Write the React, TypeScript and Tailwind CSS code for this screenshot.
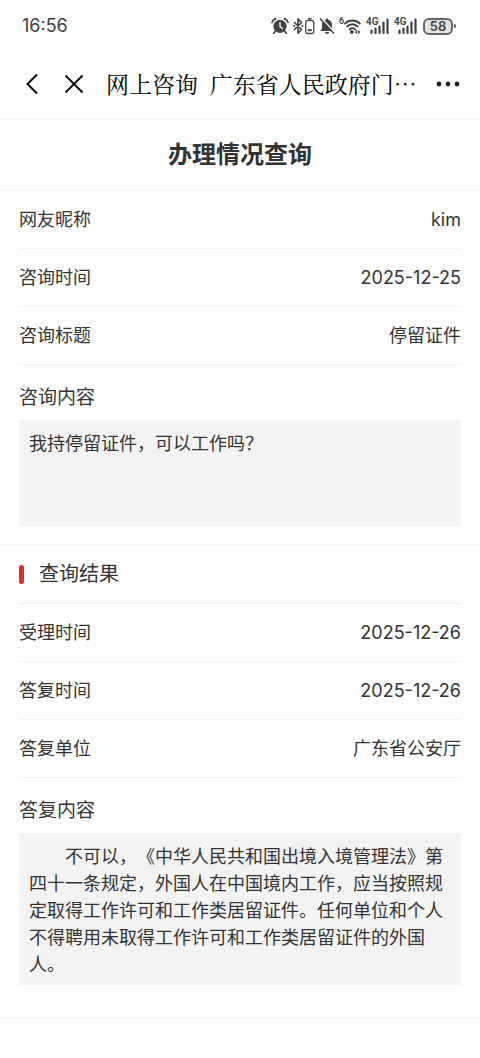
import type { ReactNode } from 'react';

function AlarmIcon() {
  return (
    <svg width="18" height="18" viewBox="0 0 18 18" aria-hidden="true">
      <path d="M1 5.500A6 6 0 0 1 4.600 1.600M17 5.500A6 6 0 0 0 13.400 1.600M4 14.600l-1.400 1.600M14 14.600l1.400 1.600" fill="none" stroke="#404040" strokeWidth="1.700" strokeLinecap="round" />
      <circle cx="9" cy="9.300" r="6.600" fill="#404040" />
      <path d="M9 5.500v4l2.600 2.200" fill="none" stroke="#fff" strokeWidth="1.300" strokeLinecap="round" />
    </svg>
  );
}

function BluetoothIcon() {
  return (
    <svg width="22" height="18" viewBox="0 0 22 18" aria-hidden="true">
      <path d="M1.500 5.500l7 7-3.500 3.600V1.900l3.500 3.600-7 7" fill="none" stroke="#404040" strokeWidth="1.600" strokeLinejoin="round" strokeLinecap="round" />
      <circle cx="1.200" cy="9" r="1" fill="#404040" />
      <circle cx="9.400" cy="9" r="1" fill="#404040" />
      <rect x="12.700" y="3.500" width="8" height="13" rx="2" fill="none" stroke="#505050" strokeWidth="1.400" />
      <path d="M14.700 1.700h4" stroke="#505050" strokeWidth="1.600" />
      <path d="M14.700 13.200h4" stroke="#404040" strokeWidth="2" />
    </svg>
  );
}

function BellOffIcon() {
  return (
    <svg width="16" height="18" viewBox="0 0 16 18" aria-hidden="true">
      <path d="M8 1.500c.8 0 1.200.5 1.200 1.200 2.500.6 3.800 2.500 3.800 5v4l1.800 2.300H1.200L3 11.700v-4c0-2.500 1.300-4.400 3.800-5C6.800 2 7.200 1.500 8 1.500zM6 15h4a2 2 0 0 1-4 0z" fill="#404040" />
      <path d="M2.800 1.600l13 14" stroke="#fff" strokeWidth="1.600" />
      <path d="M1.500 2.200L14.500 16" stroke="#404040" strokeWidth="1.600" strokeLinecap="round" />
    </svg>
  );
}

function WifiIcon() {
  return (
    <svg width="24" height="18" viewBox="0 0 24 18" className="overflow-visible" aria-hidden="true">
      <text x="0" y="7" fontSize="9" fontWeight="600" fill="#404040" className="font-['Roboto']">6</text>
      <path d="M6 6.600a10.500 10.500 0 0 1 14.800 0M8.200 9.500a7.200 7.200 0 0 1 10.400 0M10.700 12.300a3.900 3.900 0 0 1 5.400 0" fill="none" stroke="#404040" strokeWidth="1.900" strokeLinecap="round" />
      <circle cx="12.800" cy="15" r="1.900" fill="#404040" />
      <path d="M18 12.800v4.400L15.600 15zM19 12.800v4.400l2.400-2.200z" fill="#404040" />
    </svg>
  );
}

function SignalIcon() {
  return (
    <svg width="24" height="18" viewBox="0 0 24 18" className="overflow-visible" aria-hidden="true">
      <text x="-1" y="8" fontSize="10" fontWeight="600" fill="#404040" className="font-['Roboto']">4G</text>
      <path d="M4.500 13.500V16M8.500 11.500V16M12.500 9.500V16M16.500 5.500V16M20.500 2.500V16" stroke="#404040" strokeWidth="2.200" strokeLinecap="round" />
    </svg>
  );
}

function Field({ label, children }: { label: string; children: ReactNode }) {
  return (
    <div className="flex h-[58px] items-center justify-between border-b border-[#f2f2f2] text-[18px] leading-6">
      <dt>{label}</dt>
      <dd>{children}</dd>
    </div>
  );
}

function ContentBlock({ label, children, className }: { label: string; children: ReactNode; className: string }) {
  return (
    <>
      <h3 className="pt-[19px] pb-2 text-[19px] leading-7">{label}</h3>
      <p className={`bg-[#f3f3f3] px-2.5 pt-2.5 pb-[7px] text-[18px] leading-[27px] ${className}`}>{children}</p>
    </>
  );
}

export default function App() {
  return (
    <div className="min-h-screen bg-[#fefefe] font-['Inter','Noto_Sans_CJK_SC',sans-serif] text-[#333] [text-spacing-trim:space-all]" lang="zh-CN">
      <div className="flex h-12 items-center justify-between pt-1 pr-6 pl-[22px] text-[#404040]">
        <time className="text-[18px] leading-6">16:56</time>
        <div className="flex items-center gap-1">
          <AlarmIcon />
          <BluetoothIcon />
          <BellOffIcon />
          <WifiIcon />
          <SignalIcon />
          <SignalIcon />
          <div className="flex items-center gap-px">
            <span className="flex h-[17px] w-[30px] items-center justify-center rounded-md border-2 border-[#666] bg-[#e2e2e2] text-[13px] leading-none font-semibold">58</span>
            <span className="h-1 w-0.5 rounded-r bg-[#555]" />
          </div>
        </div>
      </div>

      <header className="flex h-[72px] items-center border-b border-[#f4f4f4] pr-5 pl-[22px] text-black">
        <button type="button" aria-label="返回" className="mr-5 flex">
          <svg width="20" height="24" viewBox="0 0 20 24" aria-hidden="true">
            <path d="M15 2.500L5.500 12l9.500 9.500" fill="none" stroke="#111" strokeWidth="2" />
          </svg>
        </button>
        <button type="button" aria-label="关闭" className="mr-5 flex">
          <svg width="24" height="24" viewBox="0 0 24 24" aria-hidden="true">
            <path d="M3.500 3.500l17 17M20.500 3.500l-17 17" fill="none" stroke="#111" strokeWidth="2" />
          </svg>
        </button>
        <h1 className="flex-1 font-['Noto_Serif_CJK_SC','Noto_Sans_CJK_SC',serif] text-[23px] leading-8 font-normal whitespace-pre">网上咨询  广东省人民政府门…</h1>
        <button type="button" aria-label="更多" className="flex">
          <svg width="24" height="24" viewBox="0 0 24 24" fill="#222" aria-hidden="true">
            <circle cx="3" cy="12" r="2.400" />
            <circle cx="12" cy="12" r="2.400" />
            <circle cx="21" cy="12" r="2.400" />
          </svg>
        </button>
      </header>

      <main>
        <h2 className="flex h-[71px] items-center justify-center border-b border-[#f4f4f4] text-[24px] leading-8 font-bold">办理情况查询</h2>

        <section className="border-b border-[#f4f4f4] px-[19px] pb-[18px]">
          <dl>
            <Field label="网友昵称">kim</Field>
            <Field label="咨询时间">2025-12-25</Field>
            <Field label="咨询标题">停留证件</Field>
          </dl>
          <ContentBlock label="咨询内容" className="min-h-[106px]">我持停留证件，可以工作吗？</ContentBlock>
        </section>

        <section className="border-b border-[#f4f4f4] px-[19px] pb-[33px]">
          <h3 className="flex h-[59px] items-center gap-[15px] border-b border-[#ececec] text-[20px] leading-7">
            <span className="h-[19px] w-[5px] rounded-sm bg-[#d6302b]" />
            查询结果
          </h3>
          <dl>
            <Field label="受理时间">2025-12-26</Field>
            <Field label="答复时间">2025-12-26</Field>
            <Field label="答复单位">广东省公安厅</Field>
          </dl>
          <ContentBlock label="答复内容" className="indent-[2em]">
            不可以，《中华人民共和国出境入境管理法》第四十一条规定，外国人在中国境内工作，应当按照规定取得工作许可和工作类居留证件。任何单位和个人不得聘用未取得工作许可和工作类居留证件的外国人。
          </ContentBlock>
        </section>
      </main>
    </div>
  );
}
